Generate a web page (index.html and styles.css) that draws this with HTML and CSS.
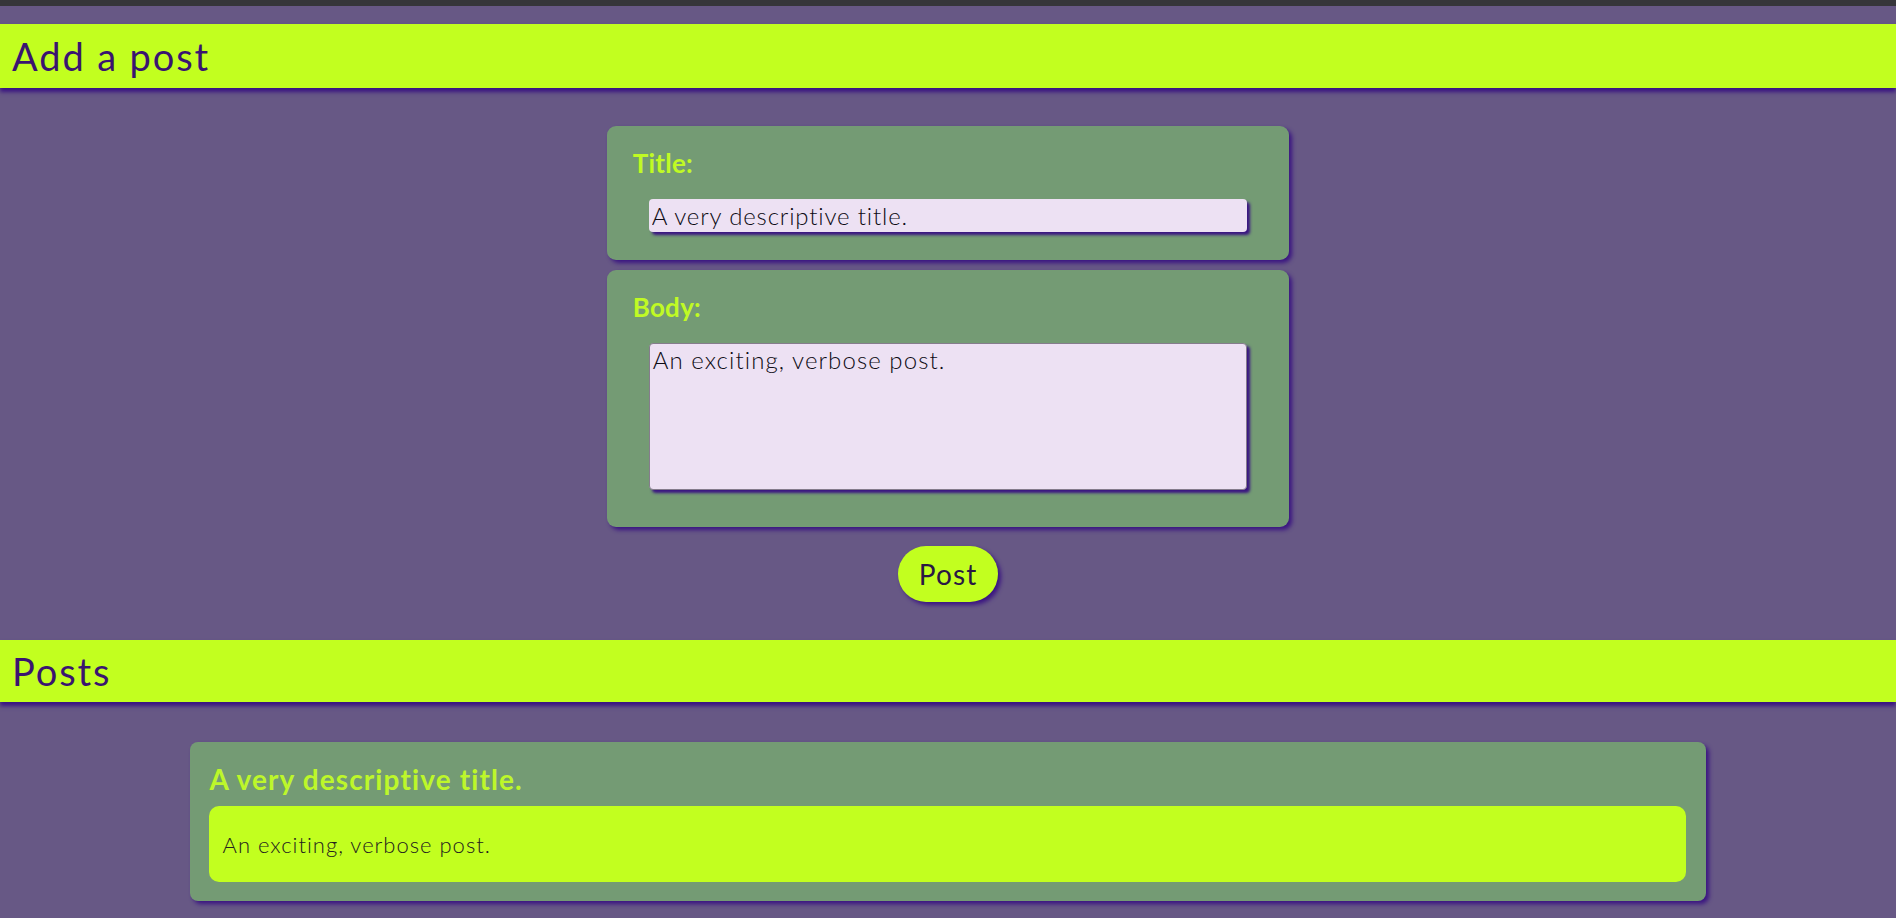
FILE: index.html
```html
<!DOCTYPE html>
<html lang="en">
<head>
<meta charset="utf-8">
<title>Posts</title>
<link rel="stylesheet" href="styles.css">
</head>
<body>
<div class="topbar"></div>
<header class="bar"><h1 class="bar-title">Add a post</h1></header>
<form class="new-post">
  <div class="field field-title">
    <label class="field-label" for="title">Title:</label>
    <input class="field-input" id="title" type="text" value="A very descriptive title.">
  </div>
  <div class="field field-body">
    <label class="field-label" for="body">Body:</label>
    <textarea class="field-textarea" id="body">An exciting, verbose post.</textarea>
  </div>
  <button class="post-btn" type="button">Post</button>
</form>
<header class="bar bar-posts"><h1 class="bar-title">Posts</h1></header>
<section class="posts">
  <article class="post">
    <h2 class="post-title">A very descriptive title.</h2>
    <div class="post-body">An exciting, verbose post.</div>
  </article>
</section>
</body>
</html>
```
FILE: styles.css
```css
* { box-sizing: border-box; }
html, body { margin: 0; padding: 0; }
body {
  background: #675885;
  font-family: "Lato", "Noto Sans", sans-serif;
  color: #1e1a26;
  min-height: 918px;
}
.topbar {
  height: 6px;
  background: #36363a;
}
.bar {
  margin-top: 18px;
  height: 64px;
  background: #c2ff1f;
  box-shadow: 0 4px 4px #3a1482;
  display: flex;
  align-items: center;
  padding-left: 12px;
  position: relative;
}
.bar-posts { height: 62px; margin-top: 0; }
.bar-title {
  margin: 0;
  font-size: 38px;
  font-weight: 400;
  letter-spacing: 0.05em;
  color: #3a1470;
  line-height: 1;
}
.new-post {
  display: flex;
  flex-direction: column;
  align-items: center;
  padding: 38px 0 38px;
  gap: 10px;
}
.field {
  width: 36%;
  background: #749b74;
  border-radius: 9px;
  box-shadow: 3px 3px 4px #3a1482;
  display: flex;
  flex-direction: column;
  padding: 21px 0 28px;
}
.field-body { padding-bottom: 37px; }
.field-label {
  display: block;
  padding-left: 26px;
  font-size: 26px;
  font-weight: 700;
  line-height: 32px;
  color: #c0fa24;
  margin-bottom: 20px;
  letter-spacing: 0.01em;
}
.field-input, .field-textarea {
  align-self: center;
  width: calc(100% - 84px);
  background: #ede1f3;
  font-family: "Lato", "Noto Sans", sans-serif;
  font-weight: 300;
  font-size: 24px;
  color: #0e0b14;
  box-shadow: 3px 3px 3px #3a1482;
  border-radius: 4px;
  outline: none;
}
.field-input {
  height: 33px;
  border: none;
  padding: 0 3px;
  line-height: 33px;
  letter-spacing: 0.035em;
}
.field-textarea {
  height: 147px;
  border: 1px solid #857c8c;
  padding: 2px 3px;
  line-height: 1.2;
  resize: none;
  letter-spacing: 0.045em;
}
.post-btn {
  margin-top: 9px;
  height: 56px;
  padding: 0 21px;
  border: none;
  border-radius: 28px;
  background: #c2ff1f;
  box-shadow: 3px 3px 4px #3a1482;
  font-family: "Lato", "Noto Sans", sans-serif;
  font-size: 28px;
  font-weight: 400;
  letter-spacing: 0.04em;
  color: #2a1844;
}
.posts {
  padding: 40px 0 16px;
}
.post {
  width: 80%;
  margin: 0 auto;
  background: #749b74;
  border-radius: 8px;
  box-shadow: 3px 3px 4px #3a1482;
  padding: 20px 20px 19px 19px;
}
.post-title {
  margin: 0 0 10px;
  padding-left: 1px;
  font-size: 28px;
  font-weight: 700;
  line-height: 34px;
  color: #bdf72a;
  letter-spacing: 0.04em;
}
.post-body {
  height: 76px;
  background: #c2ff1f;
  border-radius: 10px;
  display: flex;
  align-items: center;
  padding-left: 14px;
  font-size: 22px;
  font-weight: 300;
  color: #24221e;
  letter-spacing: 0.045em;
}
```
